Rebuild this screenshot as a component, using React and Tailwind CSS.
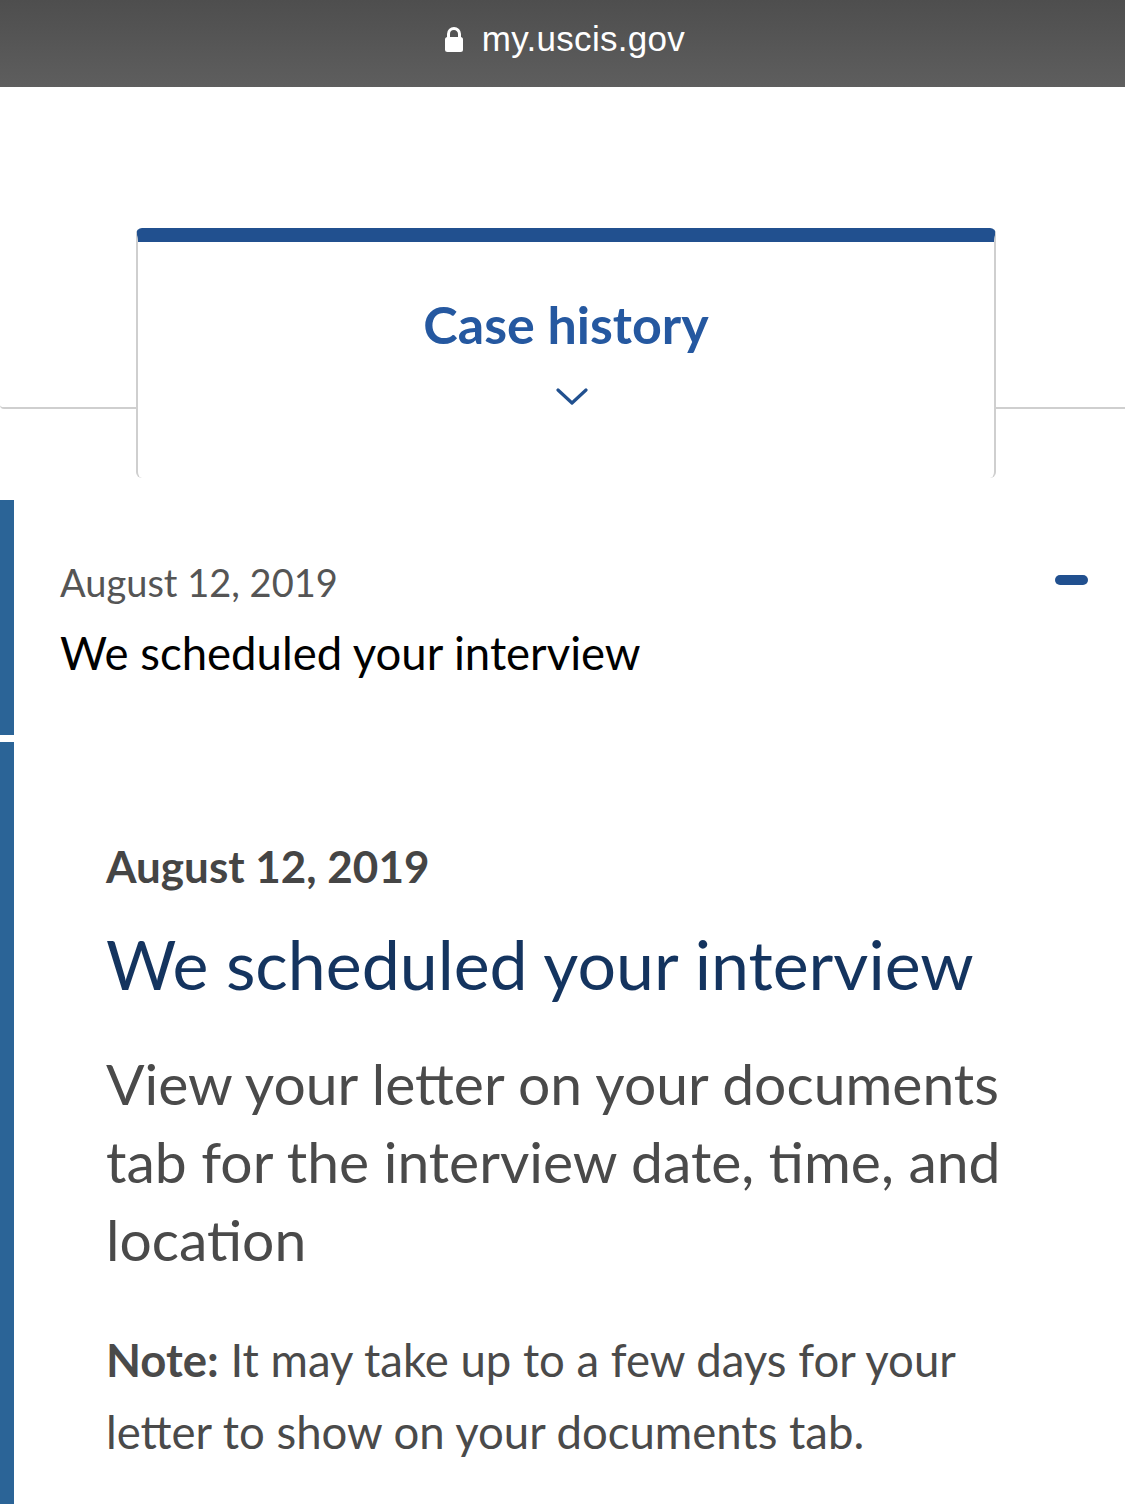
import React from 'react';

const LockIcon = () => (
  <svg width="20" height="27" viewBox="0 0 20 27" className="block">
    <path d="M4.5 12V8a5.5 5.5 0 0 1 11 0v4" fill="none" stroke="#fff" strokeWidth="3" />
    <rect x="1" y="11" width="18" height="15" rx="2.5" fill="#fff" />
  </svg>
);

const Chevron = () => (
  <svg width="32" height="18" viewBox="0 0 32 18" className="block">
    <path d="M2 2l14 13L30 2" fill="none" stroke="#21508f" strokeWidth="3.2" strokeLinecap="round" strokeLinejoin="round" />
  </svg>
);

const App = () => {
  return (
    <div className="w-[1125px] h-[1504px] bg-white overflow-hidden font-['Lato','Noto_Sans',sans-serif]">
      {/* browser url bar */}
      <header className="h-[87px] bg-gradient-to-b from-[#4e4e4e] to-[#5e5e5e] flex items-center justify-center gap-[18px] pl-[4px] pb-[8px]">
        <LockIcon />
        <span className="text-white text-[35px] font-['Liberation_Sans',sans-serif] tracking-[0.3px]">my.uscis.gov</span>
      </header>

      {/* tab row */}
      <div className="flex items-start mt-[141px]">
        <div className="w-[136px] h-[181px] border-b-2 border-[#cfcfcf] rounded-bl-sm" />
        <div className="w-[860px] h-[250px] border-t-[14px] border-x-2 border-t-[#21508f] border-x-[#cfcfcf] rounded-t-md rounded-b-md flex flex-col items-center pt-[52px]">
          <h2 className="text-[52px] leading-[60px] font-bold text-[#2558a0]">Case history</h2>
          <div className="mt-[34px] ml-[12px]">
            <Chevron />
          </div>
        </div>
        <div className="flex-1 h-[181px] border-b-2 border-[#cfcfcf]" />
      </div>

      {/* history list */}
      <div className="mt-[22px] flex flex-col gap-[7px]">
        <div className="flex h-[235px]">
          <div className="w-[14px] bg-[#2b6497]" />
          <div className="flex-1 flex justify-between pl-[46px] pr-[37px] pt-[58px]">
            <div>
              <p className="text-[38px] leading-[48px] text-[#555555]">August 12, 2019</p>
              <p className="mt-[21px] text-[45.5px] leading-[52px] text-black">We scheduled your interview</p>
            </div>
            <div className="w-[33px] h-[10px] rounded-full bg-[#21508f] mt-[17px]" />
          </div>
        </div>

        <div className="flex h-[780px]">
          <div className="w-[14px] bg-[#2b6497]" />
          <div className="flex-1 pl-[92px] pr-[20px] pt-[98px]">
            <p className="text-[44px] leading-[52px] font-bold text-[#454545]">August 12, 2019</p>
            <h1 className="mt-[34px] text-[68px] leading-[76px] text-[#14345f]">We scheduled your interview</h1>
            <p className="mt-[42px] text-[57px] leading-[78px] text-[#4a4a4a]">
              View your letter on your documents<br />
              tab for the interview date, time, and<br />
              location
            </p>
            <p className="mt-[46px] text-[45.5px] leading-[72px] text-[#4a4a4a]">
              <span className="font-bold">Note:</span> It may take up to a few days for your<br />
              letter to show on your documents tab.
            </p>
          </div>
        </div>
      </div>
    </div>
  );
};

export default App;
